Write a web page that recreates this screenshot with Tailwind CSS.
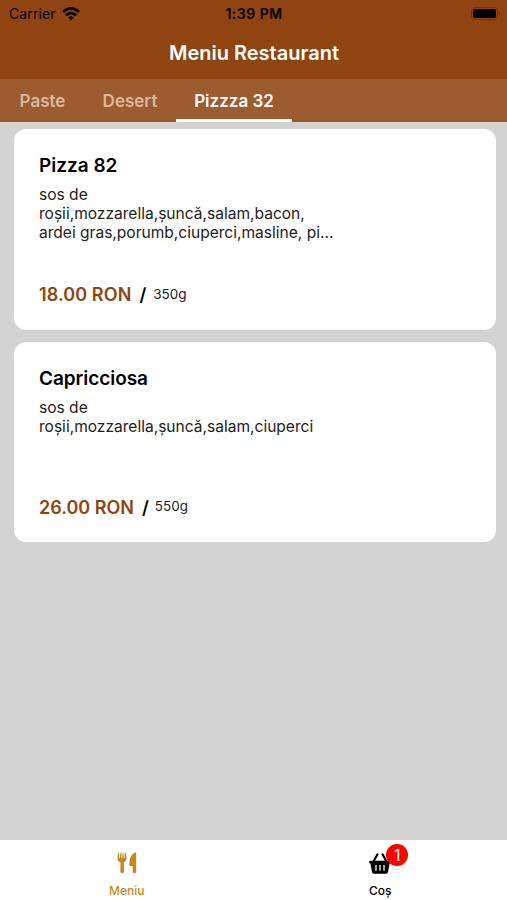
<!DOCTYPE html>
<html lang="ro">
<head>
    <meta charset="UTF-8">
    <meta name="viewport" content="width=device-width, initial-scale=1.0">
    <title>Meniu Restaurant</title>
    <script src="https://cdn.jsdelivr.net/npm/@tailwindcss/browser@4"></script>
</head>

<body class="bg-[#d3d3d3] font-['Inter',sans-serif] text-black">
    <div class="flex flex-col h-[900px] w-[507px] overflow-hidden">
        <!-- Status bar + title -->
        <header class="bg-[#8f4411] h-[79px] shrink-0">
            <div class="grid grid-cols-3 items-center h-[27px] pl-[9px] pr-[6px]">
                <div class="flex items-center gap-[6px]">
                    <span class="text-[14px] tracking-[0.1px]">Carrier</span>
                    <svg class="w-[18px] h-[14px]" viewBox="0 0 18 14" fill="none" stroke="#000" stroke-width="2.7">
                        <path d="M1 5.1 Q9 -2.2 17 5.1" />
                        <path d="M3.9 8.3 Q9 3.8 14.1 8.3" />
                        <path d="M9 13.4 L6 10.4 Q9 8 12 10.4 Z" fill="#000" stroke="none" />
                    </svg>
                </div>
                <span class="-ml-[2px] text-center text-[14px] tracking-[0.5px] font-semibold">1:39 PM</span>
                <svg class="w-[31px] h-[14px] justify-self-end" viewBox="0 0 31 14">
                    <rect x="1.5" y="0.4" width="26" height="12.2" rx="3.6" fill="none" stroke="#6b330d" stroke-width="1" />
                    <rect x="3" y="2" width="23" height="9" rx="2" fill="#000" />
                    <path d="M29 4.5 Q31 6.5 29 8.5 Z" fill="#6b330d" />
                </svg>
            </div>
            <h1 class="pl-[1px] text-center text-white text-[20px] leading-[52px] font-semibold">Meniu Restaurant</h1>
        </header>

        <!-- Category tabs -->
        <nav class="flex bg-[#9c5c2f] h-[43px] shrink-0 text-[17px] leading-[44px] font-semibold text-[#dab79e]">
            <div class="w-[84px] pl-[1px] text-center">Paste</div>
            <div class="w-[92px] text-center">Desert</div>
            <div class="w-[116px] text-center text-white border-b-[3px] border-white">Pizzza 32</div>
        </nav>

        <!-- Products -->
        <main class="flex-1 flex flex-col gap-[12.5px] pt-[7px] pl-[14px] pr-[11px]">
            <article class="flex flex-col bg-white rounded-[12px] h-[200.5px] px-[25px]">
                <h2 class="mt-[24px] text-[19px] leading-[26px] font-semibold">Pizza 82</h2>
                <p class="mt-[6px] text-[15.55px] leading-[19px] text-[#222] whitespace-nowrap">sos de<br>roșii,mozzarella,șuncă,salam,bacon,<br>ardei gras,porumb,ciuperci,masline, pi...</p>
                <div class="flex items-center mt-auto mb-[23px] h-[24px] whitespace-nowrap">
                    <span class="text-[18px] tracking-[0.1px] font-semibold text-[#8f4411]">18.00 RON</span>
                    <span class="ml-[8px] text-[18px] font-semibold">/</span>
                    <span class="ml-[7px] -mt-[1px] text-[13.5px] text-[#222]">350g</span>
                </div>
            </article>
            <article class="flex flex-col bg-white rounded-[12px] h-[200px] px-[25px]">
                <h2 class="mt-[24px] text-[19px] leading-[26px] tracking-[-0.05px] font-semibold">Capricciosa</h2>
                <p class="mt-[6px] text-[15.55px] leading-[19px] text-[#222] whitespace-nowrap">sos de<br>roșii,mozzarella,șuncă,salam,ciuperci</p>
                <div class="flex items-center mt-auto mb-[23px] h-[24px] whitespace-nowrap">
                    <span class="text-[18px] font-semibold text-[#8f4411]">26.00 RON</span>
                    <span class="ml-[8px] text-[18px] font-semibold">/</span>
                    <span class="ml-[6px] -mt-[1px] text-[13.5px] text-[#222]">550g</span>
                </div>
            </article>
        </main>

        <!-- Bottom navigation -->
        <footer class="grid grid-cols-2 bg-white h-[60px] shrink-0 text-[12px] leading-[16px] font-medium">
            <div class="flex flex-col items-center pt-[12px] text-[#c18a20]">
                <svg class="w-[20px] h-[22px]" viewBox="0 0 20 22" fill="currentColor">
                    <path d="M0.9 1.2 Q1.5 0.2 2 1.2 L2.3 6.2 H2.9 L3.3 1 Q3.9 0 4.4 1 L4.6 6.2 H5.2 L5.5 1 Q6 0 6.5 1 L6.8 6.2 H7.4 L7.8 1.2 Q8.4 0.2 9 1.2 L9.5 6.5 Q9.4 9.6 6.8 10.6 L7.1 19.6 Q6.9 21.2 5.2 21.2 Q3.4 21.2 3.3 19.6 L3.6 10.6 Q0.6 9.6 0.5 6.5 Z" />
                    <path d="M19.2 1.2 V19.8 Q19 21.2 17.5 21.2 Q15.8 21.2 15.7 19.8 V14 H13.4 Q12.3 13.8 12.3 12.6 Q11.9 3.6 17.9 0.5 Q19 0.2 19.2 1.2 Z" />
                </svg>
                <span class="mt-[9px]">Meniu</span>
            </div>
            <div class="flex flex-col items-center pt-[13px]">
                <div class="relative">
                    <svg class="w-[22px] h-[21px]" viewBox="0 0 22 21">
                        <path d="M8.4 1.4 L4.2 9 M13.6 1.4 L17.8 9" stroke="#000" stroke-width="2.1" stroke-linecap="round" />
                        <path d="M1 7.8 H21 Q22 8 22 9 Q22 10.3 20.6 10.4 L19 19 Q18.6 20.8 17 20.8 H5 Q3.4 20.8 3 19 L1.4 10.4 Q0 10.3 0 9 Q0 8 1 7.8 Z" />
                        <path d="M7 12.4 V17.2 M11 12.4 V17.2 M15 12.4 V17.2" stroke="#fff" stroke-width="1.3" stroke-linecap="round" />
                    </svg>
                    <span class="absolute left-[17px] -top-[9px] flex items-center justify-center w-[22px] h-[22px] rounded-full bg-[#ff0000] text-white text-[16px] font-normal">1</span>
                </div>
                <span class="mt-[9px]">Coș</span>
            </div>
        </footer>
    </div>
</body>
</html>
